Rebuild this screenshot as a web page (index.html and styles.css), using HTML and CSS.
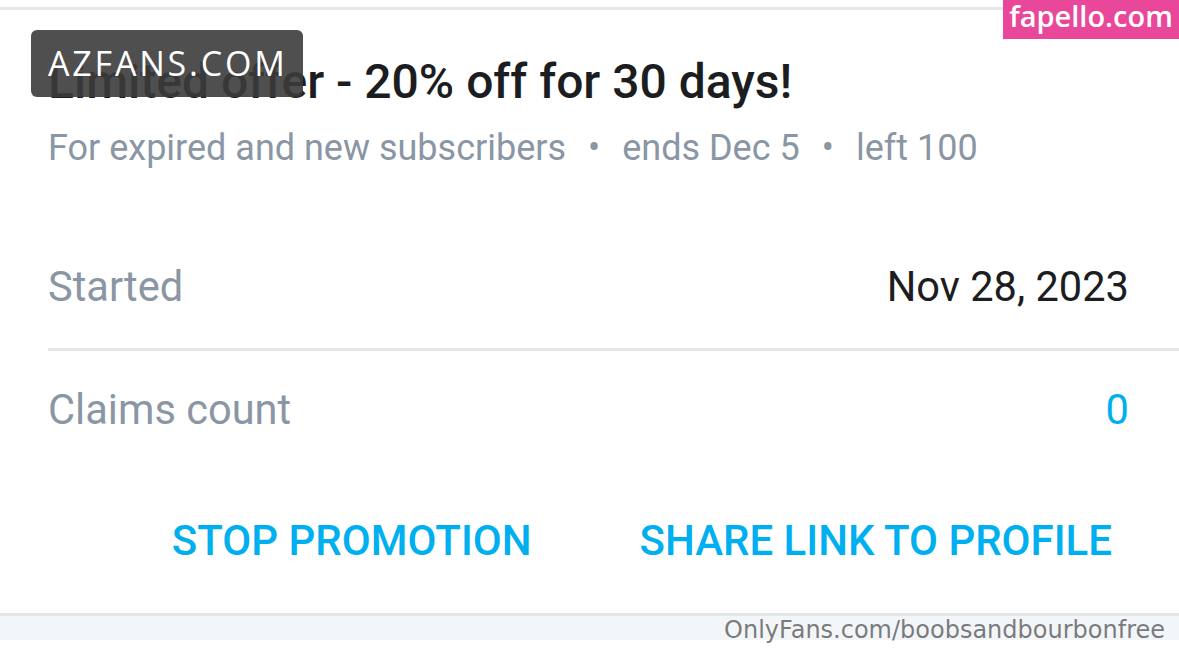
FILE: index.html
```html
<!DOCTYPE html>
<html>
<head>
<meta charset="utf-8">
<link rel="stylesheet" href="styles.css">
</head>
<body>
<div class="page">
  <div class="top-rule"></div>
  <div class="card">
    <h1 class="title">Limited offer - 20% off for 30 days!</h1>
    <div class="subtitle">
      <span>For expired and new subscribers</span>
      <span class="dot">•</span>
      <span>ends Dec 5</span>
      <span class="dot">•</span>
      <span>left 100</span>
    </div>
    <div class="row row-first">
      <span class="label">Started</span>
      <span class="value">Nov 28, 2023</span>
    </div>
    <div class="row row-second">
      <span class="label">Claims count</span>
      <span class="value value-blue">0</span>
    </div>
    <div class="actions">
      <button class="btn">STOP PROMOTION</button>
      <button class="btn">SHARE LINK TO PROFILE</button>
    </div>
  </div>
  <div class="bottom-strip"></div>
  <div class="wm-az">AZFANS.COM</div>
  <div class="wm-fap">fapello.com</div>
  <div class="wm-of">OnlyFans.com/boobsandbourbonfree</div>
</div>
</body>
</html>
```

FILE: styles.css
```css
* { box-sizing: border-box; }
html, body { margin: 0; padding: 0; background: #fff; }
body { width: 1179px; height: 658px; overflow: hidden; font-family: Roboto, "Liberation Sans", sans-serif; }
.page { position: relative; width: 1179px; height: 658px; padding-top: 7px; }
.top-rule { height: 3px; background: #e4e8eb; }
.card { padding: 0 0 0 48px; }
.title {
  margin: 44px 0 0 0;
  font-weight: 500;
  font-size: 48px;
  line-height: 56px;
  color: #1c1d20;
}
.subtitle {
  margin-top: 17px;
  font-size: 36px;
  line-height: 42px;
  color: #8a96a3;
  display: flex;
}
.subtitle .dot { padding: 0 22px; }
.row {
  display: flex;
  justify-content: space-between;
  align-items: baseline;
  padding-right: 50px;
  font-size: 41.6px;
  line-height: 48px;
}
.row-first { margin-top: 94px; padding-bottom: 37px; border-bottom: 3px solid #e3e7e9; }
.row-second { margin-top: 35px; }
.label { color: #8a96a3; }
.value { color: #1c1d20; }
.value-blue { color: #00aff0; }
.actions {
  margin-top: 83px;
  display: flex;
  justify-content: flex-end;
  gap: 74px;
  padding-right: 50px;
}
.btn {
  background: none;
  border: 0;
  padding: 0 17px;
  font-family: Roboto, "Liberation Sans", sans-serif;
  font-weight: 500;
  font-size: 42px;
  line-height: 48px;
  color: #00aff0;
}
.bottom-strip {
  margin-top: 48px;
  height: 27px;
  border-top: 3px solid #e1e6e9;
  background: #f2f6f9;
}
.wm-az {
  position: absolute;
  left: 31px;
  top: 30px;
  width: 272px;
  height: 67px;
  border-radius: 6px;
  background: rgba(60, 60, 60, 0.9);
  color: #fff;
  font-family: "Open Sans", sans-serif;
  font-size: 34px;
  letter-spacing: 2.8px;
  line-height: 67px;
  padding-left: 17px;
  white-space: nowrap;
}
.wm-fap {
  position: absolute;
  right: 0;
  top: 0;
  width: 176px;
  height: 39px;
  background: #e8479a;
  color: #fff;
  font-family: "Open Sans", sans-serif;
  font-weight: 600;
  font-size: 29px;
  line-height: 32px;
  text-align: center;
  white-space: nowrap;
}
.wm-of {
  position: absolute;
  right: 14px;
  top: 615px;
  font-family: "DejaVu Sans", sans-serif;
  font-size: 24px;
  line-height: 30px;
  color: rgba(100, 100, 100, 0.85);
  white-space: nowrap;
}
```
